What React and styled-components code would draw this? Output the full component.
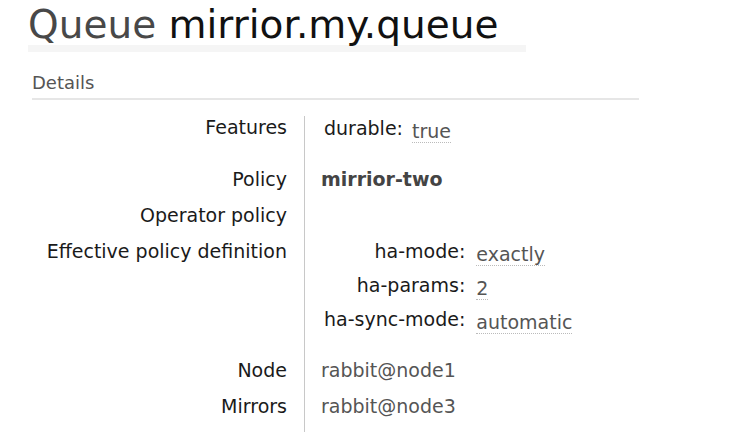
import React from "react";
import styled, { createGlobalStyle } from "styled-components";

const Global = createGlobalStyle`
  html, body { margin: 0; padding: 0; background: #fff; overflow: hidden; }
  body { font-family: "DejaVu Sans", Verdana, sans-serif; }
`;

const Page = styled.div`
  padding: 5px 0 0 28px;
  width: 740px;
  height: 432px;
  box-sizing: border-box;
`;

const Title = styled.h1`
  display: inline-block;
  margin: 0;
  padding: 0 28px 0 0;
  font-size: 39px;
  line-height: 40px;
  font-weight: normal;
  color: #484848;
  border-bottom: 7px solid #f5f5f5;
`;

const TitleName = styled.span`
  color: #111;
`;

const Section = styled.section`
  margin: 21px 0 0 4px;
  width: 607px;
`;

const SectionHead = styled.h2`
  margin: 0;
  padding: 0 0 5px 0;
  font-size: 18px;
  line-height: 20px;
  font-weight: normal;
  color: #555;
  border-bottom: 2px solid #e6e6e6;
`;

const Facts = styled.table`
  margin-top: 16px;
  border-collapse: collapse;
  border-spacing: 0;
  font-size: 19px;
  line-height: 22px;
`;

const Label = styled.th`
  width: 255px;
  text-align: right;
  vertical-align: top;
  font-weight: normal;
  color: #1a1a1a;
  white-space: nowrap;
  padding: ${(p) => p.$pt ?? 7}px 17px ${(p) => p.$pb ?? 7}px 0;
  border-right: 1px solid #c8c8c8;
`;

const Value = styled.td`
  vertical-align: top;
  color: #555;
  white-space: nowrap;
  padding: ${(p) => p.$pt ?? 7}px 0 ${(p) => p.$pb ?? 7}px 16px;
`;

const Strong = styled.b`
  color: #444;
  font-weight: bold;
`;

const Pairs = styled.table`
  border-collapse: collapse;
  border-spacing: 0;
`;

const PairKey = styled.th`
  text-align: right;
  vertical-align: top;
  font-weight: normal;
  color: #1a1a1a;
  white-space: nowrap;
  padding: 0 0 12px 3px;
`;

const PairVal = styled.td`
  vertical-align: top;
  white-space: nowrap;
  padding: 3px 0 0 ${(p) => p.$gap}px;
`;

const Abbr = styled.abbr`
  display: inline-block;
  text-decoration: none;
  color: #555;
  border-bottom: 1px dotted #bbb;
`;

function KeyValues({ items, gap }) {
  return (
    <Pairs>
      <tbody>
        {items.map(([k, v]) => (
          <tr key={k}>
            <PairKey>{k}:</PairKey>
            <PairVal $gap={gap}>
              <Abbr>{v}</Abbr>
            </PairVal>
          </tr>
        ))}
      </tbody>
    </Pairs>
  );
}

export default function App() {
  return (
    <>
      <Global />
      <Page>
        <Title>
          Queue <TitleName>mirrior.my.queue</TitleName>
        </Title>
        <Section>
          <SectionHead>Details</SectionHead>
          <Facts>
            <tbody>
              <tr>
                <Label $pt={0}>Features</Label>
                <Value $pt={1} $pb={10}>
                  <KeyValues items={[["durable", "true"]]} gap={9} />
                </Value>
              </tr>
              <tr>
                <Label>Policy</Label>
                <Value>
                  <Strong>mirrior-two</Strong>
                </Value>
              </tr>
              <tr>
                <Label>Operator policy</Label>
                <Value></Value>
              </tr>
              <tr>
                <Label>Effective policy definition</Label>
                <Value $pt={7} $pb={10}>
                  <KeyValues
                    items={[
                      ["ha-mode", "exactly"],
                      ["ha-params", "2"],
                      ["ha-sync-mode", "automatic"],
                    ]}
                    gap={11}
                  />
                </Value>
              </tr>
              <tr>
                <Label>Node</Label>
                <Value>rabbit@node1</Value>
              </tr>
              <tr>
                <Label $pb={30}>Mirrors</Label>
                <Value $pb={30}>rabbit@node3</Value>
              </tr>
            </tbody>
          </Facts>
        </Section>
      </Page>
    </>
  );
}
